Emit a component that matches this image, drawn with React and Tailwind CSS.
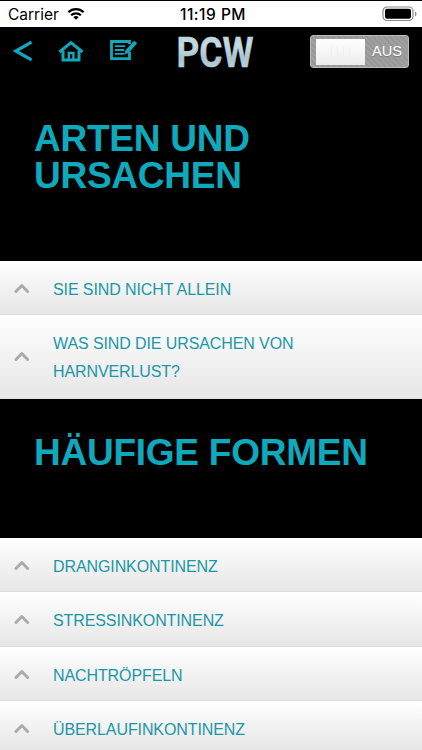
import { clsx } from "clsx";

const sections = [
  {
    title: "Arten und Ursachen",
    className: "h-[180px] pt-[39px]",
    items: [
      { label: "Sie sind nicht allein", className: "h-[54px]" },
      { label: "Was sind die Ursachen von Harnverlust?", className: "h-[84px] pb-[2px]" },
    ],
  },
  {
    title: "Häufige Formen",
    className: "h-[139px] pt-[35px]",
    items: [
      { label: "Dranginkontinenz", className: "h-[54px]" },
      { label: "Stressinkontinenz", className: "h-[55px]" },
      { label: "Nachtröpfeln", className: "h-[54px]" },
      { label: "Überlaufinkontinenz", className: "h-[49px] pt-[4px] border-b-0" },
    ],
  },
];

function StatusBar() {
  return (
    <div className="grid h-[27px] shrink-0 grid-cols-[1fr_auto_1fr] items-center border-t border-black bg-white px-2 text-black">
      <div className="flex items-center gap-[8px]">
        <span className="pt-px font-['Inter'] text-[15.5px] leading-none">Carrier</span>
        <svg width="18" height="14" viewBox="0 0 20 14" fill="none" stroke="#000" strokeWidth="2.5">
          <path d="M1.500 5.100a12.200 12.200 0 0 1 17 0" />
          <path d="M4.600 8.400a7.700 7.700 0 0 1 10.800 0" />
          <path d="M10 13.500 7 10.600a4.400 4.400 0 0 1 6 0z" fill="#000" stroke="none" />
        </svg>
      </div>
      <span className="pt-px pl-1 font-['Inter'] text-[15.5px] leading-none font-medium tracking-[0.5px]">11:19 PM</span>
      <svg className="-mr-[4px] justify-self-end" width="36" height="16" viewBox="0 0 36 16">
        <rect x="1" y="1" width="30" height="13.500" rx="4" fill="#fff" stroke="#8a8a8a" strokeWidth="1.200" />
        <rect x="3" y="2.800" width="26" height="10" rx="2" />
        <path d="M33 5.500c2 .8 2 4.200 0 5z" fill="#8a8a8a" />
      </svg>
    </div>
  );
}

function Logo() {
  return (
    <svg width="80" height="36" viewBox="0 0 80 36" role="img" aria-label="PCW" className="overflow-visible">
      <defs>
        <linearGradient id="steel" x1="0" y1="0" x2="0" y2="1">
          <stop offset="0" stopColor="#b4cbd6" />
          <stop offset=".35" stopColor="#c5dae3" />
          <stop offset=".6" stopColor="#abc4d0" />
          <stop offset="1" stopColor="#c4d8e1" />
        </linearGradient>
      </defs>
      <text x=".5" y="31" textLength="77" lengthAdjust="spacingAndGlyphs" fill="url(#steel)" stroke="url(#steel)" strokeWidth=".4" className="font-['Roboto'] text-[42px] font-bold">
        PCW
      </text>
    </svg>
  );
}

function NavBar() {
  return (
    <header className="flex h-[54px] shrink-0 items-start bg-black">
      <button className="mt-[13px] ml-[13px]" aria-label="Zurück">
        <svg width="20" height="22" viewBox="0 0 20 22" fill="none" stroke="#0fa9bd" strokeWidth="3.2">
          <path d="M18.500 2.200 2.800 11l15.700 8.800" />
        </svg>
      </button>
      <button className="mt-[13px] ml-[25px]" aria-label="Startseite">
        <svg width="26" height="22" viewBox="0 0 26 22" fill="none" stroke="#0fa9bd" strokeWidth="3">
          <path d="M1.500 12 13 2.600 24.500 12" />
          <path d="M5 10.500v9.500h16v-9.500" />
          <path d="M10.800 20v-7h4.600v7" strokeWidth="2.400" />
        </svg>
      </button>
      <button className="mt-[12px] ml-[25px]" aria-label="Notizen">
        <svg width="29" height="22" viewBox="0 0 29 22" fill="none" stroke="#0fa9bd">
          <path d="M20.500 5V2.500H2.500v17.200h18V13" strokeWidth="2.800" />
          <path d="M6 7.200h10M6 11h9M6 14.800h9" strokeWidth="1.800" />
          <path d="m26.600 3-8.300 9.300" strokeWidth="4" />
          <path d="m16.600 10.600 3.200 2.900-4.600 2.300z" fill="#0fa9bd" stroke="none" />
        </svg>
      </button>
      <div className="mt-[9px] ml-[38px]">
        <Logo />
      </div>
      <button
        role="switch"
        aria-checked="false"
        className="mt-2 mr-[13px] ml-auto flex h-[33px] w-[99px] items-center rounded-[3px] border border-[#bcbcbc] bg-[repeating-linear-gradient(45deg,#989898_0,#989898_2px,#a0a0a0_2px,#a0a0a0_4px)] pl-[5px]"
      >
        <span className="flex h-[26px] w-[49px] items-center justify-center gap-[5px] bg-linear-to-b from-white to-[#ececec]">
          <span className="h-2.5 w-px bg-[#f0f0f0]" />
          <span className="h-2.5 w-px bg-[#f0f0f0]" />
          <span className="h-2.5 w-px bg-[#f0f0f0]" />
          <span className="h-2.5 w-px bg-[#f0f0f0]" />
        </span>
        <span className="ml-[7px] pb-px text-[14.5px] leading-none text-white [text-shadow:0_1px_1px_#777]">AUS</span>
      </button>
    </header>
  );
}

function Row({ label, className }) {
  return (
    <button
      className={clsx(
        "flex w-full shrink-0 items-center border-b border-[#dedede] bg-linear-to-b from-white to-[#e6e6e6] pr-10 pl-[14px] text-left",
        className
      )}
    >
      <svg className="shrink-0" width="16" height="12" viewBox="0 0 16 12" fill="none" stroke="#ababab" strokeWidth="3" strokeLinecap="round" strokeLinejoin="round">
        <path d="m2 9.500 5.800-6L13.600 9.500" />
      </svg>
      <span className="ml-[23px] w-[270px] pt-[4px] text-[16px] leading-[28px] tracking-[-0.1px] text-[#1c97a6] uppercase">{label}</span>
    </button>
  );
}

export default function App() {
  return (
    <div className="flex h-[750px] w-[422px] flex-col overflow-hidden bg-black font-['Liberation_Sans',Arial,sans-serif]">
      <StatusBar />
      <NavBar />
      {sections.map((section) => (
        <section key={section.title} className="shrink-0">
          <h1 className={clsx("bg-black pr-10 pl-[34px] text-[37px] leading-[37px] font-bold tracking-[-0.25px] text-[#0fa9bd] uppercase", section.className)}>
            {section.title}
          </h1>
          {section.items.map((item) => (
            <Row key={item.label} {...item} />
          ))}
        </section>
      ))}
    </div>
  );
}
